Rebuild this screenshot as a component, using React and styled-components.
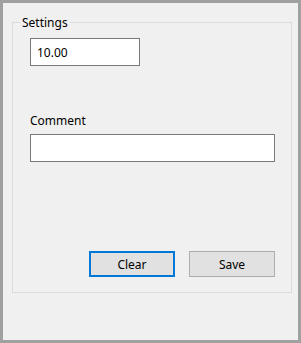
import React from 'react'
import styled, { createGlobalStyle } from 'styled-components'

const GlobalStyle = createGlobalStyle`
  html, body {
    margin: 0;
    padding: 0;
    background: #f0f0f0;
  }
  body {
    font-family: "Noto Sans", "Liberation Sans", sans-serif;
    font-size: 12px;
    color: #000;
  }
`

const Window = styled.div`
  width: 301px;
  height: 343px;
  box-sizing: border-box;
  border: 3px solid #a0a0a0;
  background: #f0f0f0;
  display: flex;
  flex-direction: column;
`

const Group = styled.div`
  position: relative;
  margin: 19px 0 0 9px;
  width: 280px;
  height: 271px;
  box-sizing: border-box;
  border: 1px solid #dcdcdc;
  padding: 15px 16px 0 17px;
  display: flex;
  flex-direction: column;
`

const Legend = styled.div`
  position: absolute;
  top: -9px;
  left: 7px;
  padding: 0 2px;
  line-height: 18px;
  background: #f0f0f0;
`

const Field = styled.div`
  margin-top: ${({ $top = 0 }) => $top}px;
  width: ${({ $width }) => $width}px;
  height: 28px;
  box-sizing: border-box;
  border: 1px solid #7a7a7a;
  background: #fff;
  padding: 1px 0 0 6px;
  display: flex;
  align-items: center;
  line-height: 16px;
`

const Label = styled.div`
  margin-top: ${({ $top }) => $top}px;
  line-height: 16px;
`

const ButtonRow = styled.div`
  margin-top: ${({ $top }) => $top}px;
  display: flex;
  justify-content: flex-end;
  gap: 14px;
`

const Button = styled.div`
  width: 86px;
  height: 26px;
  box-sizing: border-box;
  border: ${({ $focused }) => ($focused ? '2px solid #0078d7' : '1px solid #adadad')};
  background: #e1e1e1;
  padding-top: 1px;
  display: flex;
  align-items: center;
  justify-content: center;
  line-height: 16px;
`

const App = () => {
  return (
    <Window>
      <GlobalStyle />
      <Group>
        <Legend>Settings</Legend>
        <Field $width={110}>10.00</Field>
        <Label $top={47}>Comment</Label>
        <Field $width={245} $top={5} />
        <ButtonRow $top={89}>
          <Button $focused>Clear</Button>
          <Button>Save</Button>
        </ButtonRow>
      </Group>
    </Window>
  )
}

export default App
